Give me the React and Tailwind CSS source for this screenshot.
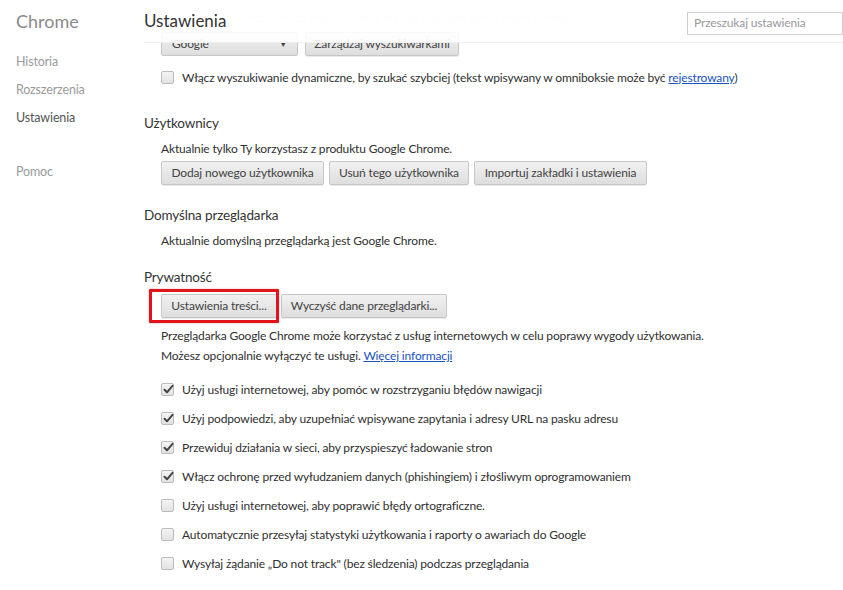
import React from "react";

const Btn = ({ children, className = "" }) => (
  <button
    className={
      "h-[24px] px-[8px] rounded-[2px] border border-[#c6c6c6] bg-gradient-to-b from-[#f1f1f1] to-[#dedede] text-[12px] text-[#444] leading-none shadow-[0_1px_0_rgba(0,0,0,0.08)] whitespace-nowrap " +
      className
    }
  >
    {children}
  </button>
);

const Check = ({ checked }) => (
  <span className="relative inline-flex w-[13px] h-[13px] shrink-0 rounded-[2px] border border-[#bcbcbc] bg-gradient-to-b from-[#f4f4f4] to-[#e2e2e2]">
    {checked && (
      <svg viewBox="0 0 13 13" className="absolute left-[0px] top-[-1px] w-[13px] h-[13px]">
        <path d="M2.5 6.8 L5 9.3 L10.5 2.8" fill="none" stroke="#444" strokeWidth="2" strokeLinecap="round" strokeLinejoin="round" />
      </svg>
    )}
  </span>
);

const CheckRow = ({ checked, children }) => (
  <div className="flex items-center gap-[8px] h-[29px]">
    <Check checked={checked} />
    <span>{children}</span>
  </div>
);

export default function App() {
  return (
    <div className="w-[843px] h-[590px] overflow-hidden bg-white flex font-['Lato',sans-serif] text-[12px] tracking-[-0.15px] text-[#303030]">
      {/* Sidebar */}
      <div className="w-[144px] shrink-0 pl-[16px]">
        <div className="text-[18px] text-[#8a8a8a] mt-[8px] leading-[26px] tracking-normal">Chrome</div>
        <div className="mt-[14px] flex flex-col text-[12.5px] text-[#9a9a9a]">
          <div className="h-[28px] leading-[28px]">Historia</div>
          <div className="h-[28px] leading-[28px]">Rozszerzenia</div>
          <div className="h-[28px] leading-[28px] text-[#555]">Ustawienia</div>
          <div className="h-[28px] leading-[28px] mt-[26px]">Pomoc</div>
        </div>
      </div>

      {/* Main */}
      <div className="relative flex-1">
        {/* Header overlay */}
        <div className="absolute left-0 right-0 top-0 h-[43px] bg-white/90 border-b border-[#eeeeee] flex items-center justify-between z-10">
          <div className="text-[17px] text-[#333] leading-none -mt-[2px] tracking-normal">Ustawienia</div>
          <div className="w-[156px] h-[23px] border border-[#cfcfcf] bg-white flex items-center px-[6px] text-[12px] text-[#999] mt-[4px]">
            Przeszukaj ustawienia
          </div>
        </div>

        {/* Content */}
        <div className="pt-[8px] pl-[17px]">
          <div className="text-[#ccc] opacity-40 pl-[80px] h-[20px] leading-[20px]">Ustaw, która wyszukiwarka ma być używana przez Pasek Adresu.</div>
          <div className="flex gap-[7px] mt-[4px]">
            <div className="w-[137px] h-[24px] rounded-[2px] border border-[#c6c6c6] bg-gradient-to-b from-[#f1f1f1] to-[#dedede] flex items-center justify-between px-[10px] text-[#444]">
              <span>Google</span>
              <span className="text-[8px]">▼</span>
            </div>
            <Btn className="w-[154px]">Zarządzaj wyszukiwarkami</Btn>
          </div>
          <div className="mt-[7px]">
            <CheckRow checked={false}>
              Włącz wyszukiwanie dynamiczne, by szukać szybciej (tekst wpisywany w omniboksie może być{" "}
              <span className="text-[#1a53c4] underline">rejestrowany</span>)
            </CheckRow>
          </div>
        </div>

        <div className="mt-[21px]">
          <div className="text-[13.5px] text-[#333] leading-[20px]">Użytkownicy</div>
          <div className="pl-[17px]">
            <div className="mt-[6px] leading-[20px]">Aktualnie tylko Ty korzystasz z produktu Google Chrome.</div>
            <div className="flex gap-[5px] mt-[2px]">
              <Btn className="w-[163px]">Dodaj nowego użytkownika</Btn>
              <Btn className="w-[140px]">Usuń tego użytkownika</Btn>
              <Btn className="w-[173px]">Importuj zakładki i ustawienia</Btn>
            </div>
          </div>
        </div>

        <div className="mt-[20px]">
          <div className="text-[13.5px] text-[#333] leading-[20px]">Domyślna przeglądarka</div>
          <div className="pl-[17px]">
            <div className="mt-[6px] leading-[20px]">Aktualnie domyślną przeglądarką jest Google Chrome.</div>
          </div>
        </div>

        <div className="mt-[16px]">
          <div className="text-[13.5px] text-[#333] leading-[20px]">Prywatność</div>
          <div className="pl-[17px]">
            <div className="flex gap-[4px] mt-[7px]">
              <div className="relative">
                <Btn className="w-[116px] h-[24px]">Ustawienia treści...</Btn>
                <div className="absolute -left-[12px] -top-[5px] -right-[2px] -bottom-[5px] border-[3px] border-[#e0141b] rounded-[1px] pointer-events-none shadow-[0_0_2px_rgba(224,20,27,0.4)]" />
              </div>
              <Btn className="w-[166px] h-[24px]">Wyczyść dane przeglądarki...</Btn>
            </div>
            <div className="mt-[8px] leading-[20px]">Przeglądarka Google Chrome może korzystać z usług internetowych w celu poprawy wygody użytkowania.</div>
            <div className="leading-[20px]">
              Możesz opcjonalnie wyłączyć te usługi.{" "}
              <span className="text-[#1a53c4] underline">Więcej informacji</span>
            </div>
            <div className="mt-[9px] flex flex-col">
              <CheckRow checked>Użyj usługi internetowej, aby pomóc w rozstrzyganiu błędów nawigacji</CheckRow>
              <CheckRow checked>Użyj podpowiedzi, aby uzupełniać wpisywane zapytania i adresy URL na pasku adresu</CheckRow>
              <CheckRow checked>Przewiduj działania w sieci, aby przyspieszyć ładowanie stron</CheckRow>
              <CheckRow checked>Włącz ochronę przed wyłudzaniem danych (phishingiem) i złośliwym oprogramowaniem</CheckRow>
              <CheckRow checked={false}>Użyj usługi internetowej, aby poprawić błędy ortograficzne.</CheckRow>
              <CheckRow checked={false}>Automatycznie przesyłaj statystyki użytkowania i raporty o awariach do Google</CheckRow>
              <CheckRow checked={false}>Wysyłaj żądanie „Do not track" (bez śledzenia) podczas przeglądania</CheckRow>
            </div>
          </div>
        </div>
      </div>
    </div>
  );
}
